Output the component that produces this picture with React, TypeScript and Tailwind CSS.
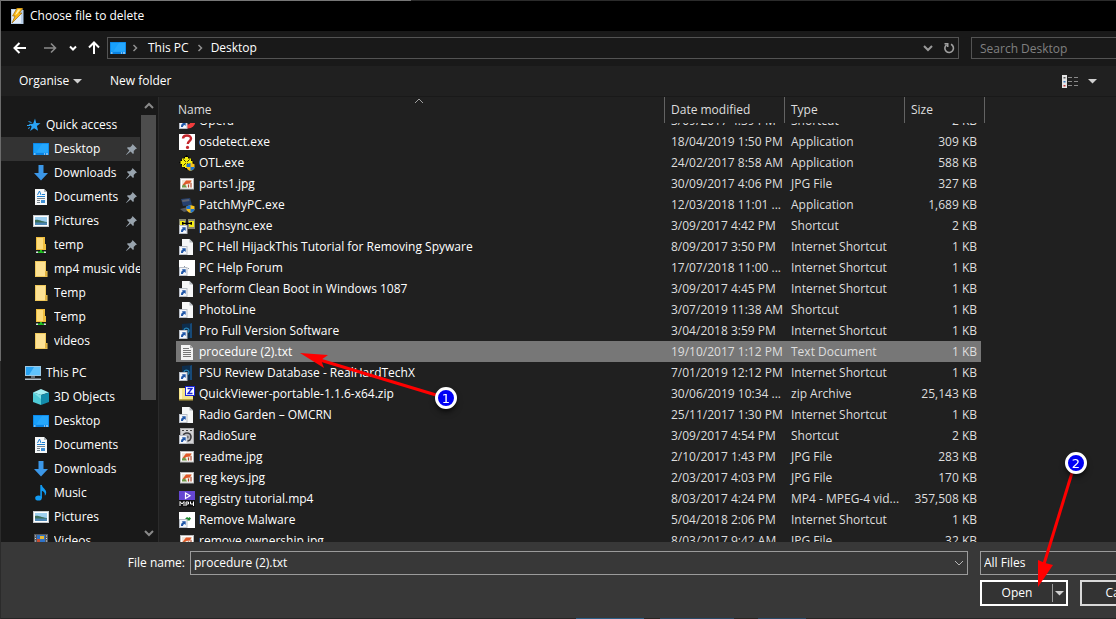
import { useLayoutEffect, useRef, useState } from 'react';
import type { ReactNode } from 'react';

type IconName =
  | 'opera' | 'question' | 'otl' | 'jpg' | 'patch' | 'pathsync' | 'page' | 'blank' | 'disc'
  | 'text' | 'zip' | 'speaker' | 'mp4' | 'malware' | 'star' | 'desktop' | 'download' | 'document'
  | 'pictures' | 'folder' | 'netFolder' | 'pc' | 'cube' | 'music' | 'videos';

// Small arrow badge in the corner of every shortcut
const shortcut = (
  <g>
    <path d="M0 7h8.500v9H0z" fill="#b9bec6" />
    <path d="M1 8h6.500v7H1z" fill="#f4f6fa" />
    <path d="M2 14c0-2.300.6-3.200 1.900-3.700L2.800 9.200h3.900v3.900l-1.100-1.100c-1 .4-1.500 1-1.600 2z" fill="#2057a8" />
  </g>
);

const shield = (
  <g>
    <path d="M11.500 8l4 1.200v3c0 2-2 3-4 3.800-2-.8-4-1.800-4-3.800v-3z" fill="#f8c21c" />
    <path d="M11.500 8v4h-4V9.200zM11.500 12h4c0 2.200-2 3.200-4 4z" fill="#1e74d2" />
  </g>
);

const sheet = (
  <g>
    <path d="M3 0h7.500L14 3.500V16H3z" fill="#f6f7f8" />
    <path d="M10.500 0L14 3.500h-3.500z" fill="#b4b9be" />
  </g>
);

const desktop = (
  <g>
    <path d="M0 2h16v12H0z" fill="#0a84e4" />
    <path d="M.8 2.800h14.400v9H.8z" fill="#18a0fb" />
    <path d="M9 2.800h6.200v9H3z" fill="#2fabff" opacity=".6" />
    <path d="M1 12.500h1.500v1H1zM11 12.500h1v1h-1zM13 12.500h2v1h-2z" fill="#e9f6ff" />
  </g>
);

const icons: Record<IconName, ReactNode> = {
  opera: (
    <g>
      <circle cx="9" cy="8" r="7.500" fill="#f23c3c" />
      <ellipse cx="9" cy="7" rx="2.600" ry="4.500" fill="#202020" />
      {shortcut}
    </g>
  ),
  question: (
    <g>
      <path d="M0 0h16v16H0z" fill="#fff" />
      <path d="M4 4.500C4.200 2.300 6 1.500 8 1.500c2.400 0 4 1.200 4 3.100 0 2.600-3.200 2.600-3.200 5.400" fill="none" stroke="#c4272d" strokeWidth="2.400" />
      <circle cx="8.500" cy="13.400" r="1.600" fill="#c4272d" />
    </g>
  ),
  otl: (
    <g>
      <path d="M7.500 0L15 7.500 7.500 15 0 7.500z" fill="#000" />
      <path d="M6 2h3v1.500h3V6h1.500v3H12v3H9v1H6v-1H3V9H1.500V6H3V3.500h3z" fill="#f5ee0e" />
      <path d="M4.500 4.500l6 6M10.500 4.500l-6 6" stroke="#000" strokeWidth=".8" />
      <path d="M6.500 6.500h2v2h-2z" fill="#f5ee0e" />
      {shield}
    </g>
  ),
  jpg: (
    <g>
      <path d="M1 2h14v11.500H1z" fill="#b9b9b9" />
      <path d="M2 3h12v9.500H2z" fill="#fff" />
      <path d="M3 4h10v7.500H3z" fill="#efe6da" />
      <path d="M3.500 9L7 4.500h5.500L11 7.500l-4 .5-1.500 2z" fill="#e0592a" />
      <path d="M3 9.500l3-1 2 3H3z" fill="#6f9a4a" />
      <path d="M9 8.500h1v3H9zM11.500 7h1v4.500h-1z" fill="#b0432c" />
    </g>
  ),
  patch: (
    <g>
      <path d="M2 2l9-1 2 7-9 1z" fill="#26406f" />
      <path d="M3 3l7-1 .5 2-7 1z" fill="#5e6573" />
      <path d="M1 12l8-2 4 3-8 2z" fill="#54595f" />
      {shield}
    </g>
  ),
  pathsync: (
    <g>
      <path d="M0 1h7v8H0zM9 1h7v10H9z" fill="#8a8a70" />
      <path d="M1 3h5v5H1zM10 3h5v6h-5z" fill="#f2ea18" />
      <path d="M3 4.800h10v1.200H3zM3 4h1.500v2.800H3zM11.500 4H13v2.800h-1.500z" fill="#000" />
      {shortcut}
    </g>
  ),
  page: <g>{sheet}{shortcut}</g>,
  blank: (
    <g>
      <path d="M0 0h16v16H0z" fill="#fff" />
      <path d="M5 6h1v1H5zM9 8h1v1H9z" fill="#8c98a5" />
      {shortcut}
    </g>
  ),
  disc: (
    <g>
      <path d="M3 1l10-1v15H3z" fill="#0d2d4c" />
      <path d="M11 1l2-1v15h-2z" fill="#174a78" />
      <path d="M5 7a2.500 2.500 0 1 1 4 2.500" fill="none" stroke="#2787b8" strokeWidth="1.300" />
      {shortcut}
    </g>
  ),
  text: (
    <g>
      <path d="M2 1h9l3 3v12H2z" fill="#f3f3f3" />
      <path d="M11 1l3 3h-3z" fill="#a9a9a9" />
      <path d="M4 4.500h6M4 6.500h8M4 8.500h8M4 10.500h8M4 12.500h8" stroke="#777" strokeWidth="1" />
    </g>
  ),
  zip: (
    <g>
      <path d="M0 2h6v1h8v11H0z" fill="#f4e48a" />
      <path d="M1 3h2v10H1z" fill="#fdf6c4" />
      <path d="M0 13h14v1.500H0z" fill="#bba644" />
      <path d="M6 0h10v10H6z" fill="#1925d9" />
      <path d="M7 1h8v8H7z" fill="#fff" />
      <path d="M8.500 2.500h4.500L9 7.500h4.500" fill="none" stroke="#1925d9" strokeWidth="1.400" />
    </g>
  ),
  speaker: (
    <g>
      <path d="M1 0h14v16H1z" fill="#a9a9ab" />
      <path d="M2 1h12v14H2z" fill="#d4d4d6" />
      <circle cx="8" cy="9" r="4.800" fill="#3b3b3f" />
      <circle cx="8" cy="9" r="3.200" fill="#b9b9bd" />
      <circle cx="8" cy="9" r="1.500" fill="#2b2b2f" />
      <path d="M3 2h2v1H3zM11 2h2v1h-2zM7 2h2v1H7z" fill="#444" />
      {shortcut}
    </g>
  ),
  mp4: (
    <g>
      <path d="M0 0h16v9H0z" fill="#6546d2" />
      <path d="M6.500 2v5.500L11 4.800z" fill="none" stroke="#fff" strokeWidth="1.200" />
      <path d="M0 9h16v7H0z" fill="#111" />
      <path d="M1 15v-4.500l2 2.500 2-2.500V15M7 15v-4h2.500v2H7M11.500 10.500v2.500H15M14.500 10.500V15" fill="none" stroke="#fff" strokeWidth="1" />
    </g>
  ),
  malware: (
    <g>
      <path d="M0 0h16v16H0z" fill="#fff" />
      <path d="M5 8l3-3 1.500 1L10.500 5 12 6.500 10 9 9 8l-2 2z" fill="#1c8a2e" />
      {shortcut}
    </g>
  ),
  star: (
    <g>
      <path d="M9 1.500l1.200 4.600 4.300.2-3.600 2.800 1.200 4.700-4-2.500-4 2.700 1.600-4.600-3.200-2.300 4.600-.4z" fill="#2aa4f4" />
      <path d="M2.500 4.500l3 1M1 8.500h3M2 11.500l2-1" stroke="#2aa4f4" strokeWidth="1" />
    </g>
  ),
  desktop,
  download: <path d="M5.500 0h5v8H15L8 15.500 1 8h4.500z" fill="#3b97e8" />,
  document: (
    <g>
      <path d="M2 0h9l3 3v13H2z" fill="#f5f7f8" />
      <path d="M11 0l3 3h-3z" fill="#aeb5ba" />
      <path d="M4.500 6L6.500 2l1.500 4M9 5.500h3M4 7.500h8" fill="none" stroke="#1d7fd0" strokeWidth="1" />
      <path d="M4 9.500h8M4 11.500h3M4 13.500h3" stroke="#77838c" />
      <path d="M8 11h4v3H8z" fill="#3f90d6" />
    </g>
  ),
  pictures: (
    <g>
      <path d="M0 2h16v12H0z" fill="#c6cacd" />
      <path d="M1 3h14v10H1z" fill="#fff" />
      <path d="M2 4h12v8H2z" fill="#9ed0f0" />
      <path d="M2 7c3-1 5 1 12 2v1H2z" fill="#3c6e58" />
      <path d="M2 9.500h12V12H2z" fill="#4b86b4" />
    </g>
  ),
  folder: (
    <g>
      <path d="M2 0h11v10h1.500v6H2z" fill="#f0c95c" />
      <path d="M3 1h9v14H3z" fill="#fde294" />
      <path d="M12 10.500l2-.5v5.500h-2z" fill="#e0b13f" />
    </g>
  ),
  netFolder: (
    <g>
      <path d="M3 0h9v7h1v6H3z" fill="#f0bf3f" />
      <path d="M4 1h6v11H4z" fill="#fddc7c" />
      <path d="M7 13h2v2H7zM4 14.500h8V16H4z" fill="#22c022" />
      <path d="M3 14.500h2V16H3zM11 14.500h2V16h-2z" fill="#d6dfe4" />
    </g>
  ),
  pc: (
    <g>
      <path d="M0 1h16v10H0z" fill="#9cc9e6" />
      <path d="M1 2h14v8H1z" fill="#27a2f2" />
      <path d="M9 2h6v8H4z" fill="#60c3fc" />
      <path d="M6 11.500h4v1H6zM0 13.500h16V15H0z" fill="#b4c2cc" />
    </g>
  ),
  cube: (
    <g>
      <path d="M0 3.500L8 0l8 3.500L8 6z" fill="#a5eef2" />
      <path d="M0 3.500L8 6v10l-8-3z" fill="#4fcbd6" />
      <path d="M16 3.500L8 6v10l8-3z" fill="#138cab" />
      <path d="M0 3.500L8 6v4z" fill="#7fe2e8" />
    </g>
  ),
  music: (
    <g>
      <ellipse cx="5.500" cy="13" rx="3.300" ry="2.600" fill="#119bf3" />
      <path d="M7.300 0h1.600c.3 3 4.300 4.200 4.300 7.400 0 1.600-.7 2.600-1.400 3.200.4-2.800-.7-4-2.900-4.900V13H7.300z" fill="#119bf3" />
    </g>
  ),
  videos: (
    <g>
      <path d="M1 1h14v14H1z" fill="#55595e" />
      <path d="M4 2h8v10H4z" fill="#2f73c9" />
      <path d="M7 3h4v3H7z" fill="#e9ba35" />
      <path d="M4 6h3v3H4z" fill="#c74c31" />
      <path d="M2 2.500h1v1H2zM2 5h1v1H2zM2 7.500h1v1H2zM13 2.500h1v1h-1zM13 5h1v1h-1zM13 7.500h1v1h-1z" fill="#d9dcdf" />
    </g>
  ),
};

function Icon({ name }: { name: IconName }) {
  return (
    <svg viewBox="0 0 16 16" className="w-4 h-4 shrink-0" aria-hidden="true">
      {icons[name]}
    </svg>
  );
}

function Chevron({ d = 'M1 3l4 4 4-4', className = '' }: { d?: string; className?: string }) {
  return (
    <svg viewBox="0 0 10 10" className={`w-2.5 h-2.5 shrink-0 ${className}`} fill="none" stroke="currentColor" aria-hidden="true">
      <path d={d} />
    </svg>
  );
}

function Triangle() {
  return (
    <svg viewBox="0 0 9 5" className="w-[9px] h-[5px] shrink-0 text-[#d0d0d0]" fill="currentColor" aria-hidden="true">
      <path d="M0 0h9L4.500 4.500z" />
    </svg>
  );
}

function Pin() {
  return (
    <svg viewBox="0 0 11 11" className="w-[11px] h-[11px] shrink-0" aria-hidden="true">
      <path d="M6.500 0L11 4.500l-1.300.4-2 2 .1 2.400-.8.700-2.400-2.400L.3 11 0 10.700l3.400-4.300L1 4l.7-.8 2.400.1 2-2z" fill="#98a3ad" />
    </svg>
  );
}

interface Place {
  label: string;
  icon: IconName;
  pinned?: boolean;
  selected?: boolean;
}

const quickAccess: Place[] = [
  { label: 'Desktop', icon: 'desktop', pinned: true, selected: true },
  { label: 'Downloads', icon: 'download', pinned: true },
  { label: 'Documents', icon: 'document', pinned: true },
  { label: 'Pictures', icon: 'pictures', pinned: true },
  { label: 'temp', icon: 'netFolder', pinned: true },
  { label: 'mp4 music videos', icon: 'folder' },
  { label: 'Temp', icon: 'folder' },
  { label: 'Temp', icon: 'netFolder' },
  { label: 'videos', icon: 'folder' },
];

const thisPc: Place[] = [
  { label: '3D Objects', icon: 'cube' },
  { label: 'Desktop', icon: 'desktop' },
  { label: 'Documents', icon: 'document' },
  { label: 'Downloads', icon: 'download' },
  { label: 'Music', icon: 'music' },
  { label: 'Pictures', icon: 'pictures' },
  { label: 'Videos', icon: 'videos' },
];

interface FileRow {
  name: string;
  icon: IconName;
  date: string;
  type: string;
  size: string;
}

const files: FileRow[] = [
  { name: 'Opera', icon: 'opera', date: '3/09/2017 4:39 PM', type: 'Shortcut', size: '2 KB' },
  { name: 'osdetect.exe', icon: 'question', date: '18/04/2019 1:50 PM', type: 'Application', size: '309 KB' },
  { name: 'OTL.exe', icon: 'otl', date: '24/02/2017 8:58 AM', type: 'Application', size: '588 KB' },
  { name: 'parts1.jpg', icon: 'jpg', date: '30/09/2017 4:06 PM', type: 'JPG File', size: '327 KB' },
  { name: 'PatchMyPC.exe', icon: 'patch', date: '12/03/2018 11:01 ...', type: 'Application', size: '1,689 KB' },
  { name: 'pathsync.exe', icon: 'pathsync', date: '3/09/2017 4:42 PM', type: 'Shortcut', size: '2 KB' },
  { name: 'PC Hell HijackThis Tutorial for Removing Spyware', icon: 'page', date: '8/09/2017 3:50 PM', type: 'Internet Shortcut', size: '1 KB' },
  { name: 'PC Help Forum', icon: 'blank', date: '17/07/2018 11:00 ...', type: 'Internet Shortcut', size: '1 KB' },
  { name: 'Perform Clean Boot in Windows 1087', icon: 'page', date: '3/09/2017 4:45 PM', type: 'Internet Shortcut', size: '1 KB' },
  { name: 'PhotoLine', icon: 'page', date: '3/07/2019 11:38 AM', type: 'Shortcut', size: '1 KB' },
  { name: 'Pro Full Version Software', icon: 'disc', date: '3/04/2018 3:59 PM', type: 'Internet Shortcut', size: '1 KB' },
  { name: 'procedure (2).txt', icon: 'text', date: '19/10/2017 1:12 PM', type: 'Text Document', size: '1 KB' },
  { name: 'PSU Review Database - RealHardTechX', icon: 'disc', date: '7/01/2019 12:12 PM', type: 'Internet Shortcut', size: '1 KB' },
  { name: 'QuickViewer-portable-1.1.6-x64.zip', icon: 'zip', date: '30/06/2019 10:34 ...', type: 'zip Archive', size: '25,143 KB' },
  { name: 'Radio Garden – OMCRN', icon: 'page', date: '25/11/2017 1:30 PM', type: 'Internet Shortcut', size: '1 KB' },
  { name: 'RadioSure', icon: 'speaker', date: '3/09/2017 4:54 PM', type: 'Shortcut', size: '2 KB' },
  { name: 'readme.jpg', icon: 'jpg', date: '2/10/2017 1:43 PM', type: 'JPG File', size: '283 KB' },
  { name: 'reg keys.jpg', icon: 'jpg', date: '2/03/2017 4:03 PM', type: 'JPG File', size: '170 KB' },
  { name: 'registry tutorial.mp4', icon: 'mp4', date: '8/03/2017 4:24 PM', type: 'MP4 - MPEG-4 vid...', size: '357,508 KB' },
  { name: 'Remove Malware', icon: 'malware', date: '5/04/2018 2:06 PM', type: 'Internet Shortcut', size: '1 KB' },
  { name: 'remove ownership.jpg', icon: 'jpg', date: '8/03/2017 9:42 AM', type: 'JPG File', size: '32 KB' },
];

function TitleBar() {
  return (
    <header className="flex items-center gap-1.5 h-[30px] pl-[9px] bg-black">
      <svg viewBox="0 0 14 16" className="w-3.5 h-4" aria-hidden="true">
        <path d="M1 1h11l1.500 1.500V16H1z" fill="#b9cfe8" />
        <path d="M2 2h9v13H2z" fill="#e4eefa" />
        <path d="M7 0h6L9.500 5H12L2 15l3-7H2.500z" fill="#fbb917" stroke="#8c5a08" strokeWidth=".6" />
        <path d="M8 1.500h2.500L7 6 5 7z" fill="#fff3b0" />
      </svg>
      <h1>Choose file to delete</h1>
    </header>
  );
}

function NavBar() {
  return (
    <nav className="flex items-center h-[35px] pl-[11px] pr-3 pb-px bg-[#191919]">
      <button aria-label="Back" className="w-4">
        <svg viewBox="0 0 16 16" className="w-4 h-4" fill="none" stroke="#fff" strokeWidth="2"><path d="M14 8H2.500M7.500 3l-5 5 5 5" /></svg>
      </button>
      <button aria-label="Forward" className="w-4 ml-3.5">
        <svg viewBox="0 0 16 16" className="w-4 h-4" fill="none" stroke="#8a8a8a" strokeWidth="1.600"><path d="M2 8h11.500M9 3.500L13.500 8 9 12.500" /></svg>
      </button>
      <button aria-label="Recent locations" className="ml-2.5">
        <Chevron d="M2 3.500l3 3 3-3" className="text-white stroke-2" />
      </button>
      <button aria-label="Up" className="w-4 ml-2 mr-[5px]">
        <svg viewBox="0 0 16 16" className="w-4 h-4" fill="none" stroke="#fff" strokeWidth="2"><path d="M8 14V2.500M3 7.500l5-5 5 5" /></svg>
      </button>
      <div className="flex-1 flex items-center h-[22px] border border-[#535353] pl-0.5">
        <Icon name="desktop" />
        <Chevron d="M3.500 2L6.500 5l-3 3" className="mx-1 mr-2 stroke-[1.500] text-[#8f8f8f]" />
        <button>This PC</button>
        <Chevron d="M3.500 2L6.500 5l-3 3" className="mx-1.5 stroke-[1.500] text-[#8f8f8f]" />
        <button>Desktop</button>
        <button aria-label="Previous locations" className="ml-auto mr-2.5">
          <Chevron className="text-[#9a9a9a] stroke-2" />
        </button>
        <button aria-label="Refresh" className="mr-[3px]">
          <svg viewBox="0 0 12 12" className="w-3 h-3" fill="none" stroke="#a0a0a0" strokeWidth="1.600">
            <path d="M8 2.300a4.300 4.300 0 1 1-4.500.5M1.500 1.800h3.200V5" />
          </svg>
        </button>
      </div>
      <input
        type="text"
        aria-label="Search Desktop"
        placeholder="Search Desktop"
        className="w-[197px] h-[22px] ml-3 px-2 border border-[#535353] bg-transparent placeholder:text-[#808080] outline-none"
      />
    </nav>
  );
}

function Toolbar() {
  return (
    <div className="flex items-center h-[31px] pl-[18px] pr-[83px] bg-[#202020] border-b border-[#191919]">
      <button className="flex items-center gap-1 w-[91px] text-left">
        Organise
        <Triangle />
      </button>
      <button>New folder</button>
      <button aria-label="Change view" className="flex items-center gap-2 ml-auto">
        <svg viewBox="0 0 18 13" className="w-[18px] h-[13px]" aria-hidden="true">
          <path d="M0 0h5v13H0z" fill="#e4e4e4" />
          <path d="M1.500 2h2v1.500h-2z" fill="#555" />
          <path d="M1.500 6h2v1.500h-2z" fill="#3a7ac0" />
          <path d="M1.500 10h2v1.500h-2z" fill="#c13333" />
          <path d="M6 2.500h4M12 2.500h4M6 6.500h4M12 6.500h4M6 10.500h4M12 10.500h4" stroke="#8a8a8a" />
        </svg>
        <Triangle />
      </button>
    </div>
  );
}

function PlaceItem({ place }: { place: Place }) {
  return (
    <li>
      <a href="#" className={`flex items-center gap-[5px] h-6 pl-8 ${place.pinned ? 'pr-[3px]' : ''} ${place.selected ? 'bg-[#333]' : ''}`}>
        <Icon name={place.icon} />
        <span className="flex-1 whitespace-nowrap overflow-hidden">{place.label}</span>
        {place.pinned && <Pin />}
      </a>
    </li>
  );
}

function Sidebar() {
  return (
    <aside className="flex shrink-0 w-[158px] bg-[#191919] border-r border-[#2b2b2b]">
      <div className="w-[139px] mr-px shrink-0 pt-4 overflow-hidden">
        <a href="#" className="flex items-center gap-1 h-6 pl-[25px]">
          <Icon name="star" />
          Quick access
        </a>
        <ul>
          {quickAccess.map((place, index) => (
            <PlaceItem key={index} place={place} />
          ))}
        </ul>
        <a href="#" className="flex items-center gap-[5px] h-6 mt-2 pl-6">
          <Icon name="pc" />
          This PC
        </a>
        <ul>
          {thisPc.map((place) => (
            <PlaceItem key={place.label} place={place} />
          ))}
        </ul>
      </div>
      {/* Scrollbar */}
      <div className="flex flex-col items-center w-[15px] text-[#8a8a8a]">
        <Chevron d="M1 7l4-4 4 4" className="my-1 stroke-2" />
        <div className="w-full h-[285px] bg-[#4d4d4d]"></div>
        <Chevron className="mt-auto mb-1 stroke-2" />
      </div>
    </aside>
  );
}

function FileList({ selected, onSelect }: { selected: string; onSelect: (name: string) => void }) {
  const listRef = useRef<HTMLDivElement>(null);

  useLayoutEffect(() => {
    if (listRef.current) listRef.current.scrollTop = 13;
  }, []);

  return (
    <main ref={listRef} className="flex-1 min-w-0 pl-[17px] overflow-hidden bg-[#202020]">
      <table className="table-fixed w-[809px] border-separate border-spacing-0 whitespace-nowrap">
        <colgroup>
          <col className="w-[489px]" />
          <col className="w-[120px]" />
          <col className="w-[120px]" />
          <col className="w-[76px]" />
          <col className="w-[4px]" />
        </colgroup>
        <thead className="sticky top-0 z-10 bg-[#202020] text-left text-[#dedede]">
          <tr className="h-[26px]">
            <th className="relative p-0 pl-0.5 font-normal border-r border-[#636363]">
              Name
              <Chevron d="M1 6l4-4 4 4" className="absolute top-0 left-1/2 -ml-1.5 text-[#a0a0a0]" />
            </th>
            <th className="p-0 pl-1.5 font-normal border-r border-[#636363]">Date modified</th>
            <th className="p-0 pl-1.5 font-normal border-r border-[#636363]">Type</th>
            <th className="p-0 pl-1.5 font-normal">Size</th>
            <th className="p-0 border-r border-[#636363]"></th>
          </tr>
        </thead>
        <tbody>
          {files.map((file) => {
            const cell = file.name === selected ? 'bg-[#777]' : '';
            return (
              <tr key={file.name} className="h-[21px] text-[#dedede] cursor-default" onClick={() => onSelect(file.name)}>
                <td className={`p-0 pl-[3px] text-white ${cell}`}>
                  <div className="flex items-center gap-1">
                    <Icon name={file.icon} />
                    {file.name}
                  </div>
                </td>
                <td className={`p-0 pl-1.5 ${cell}`}>{file.date}</td>
                <td className={`p-0 pl-1.5 ${cell}`}>{file.type}</td>
                <td className={`p-0 pr-1 text-right ${cell}`}>{file.size}</td>
                <td className="p-0"></td>
              </tr>
            );
          })}
        </tbody>
      </table>
    </main>
  );
}

function Footer({ fileName, onChange }: { fileName: string; onChange: (name: string) => void }) {
  return (
    <footer className="bg-[#383838]">
      <div className="flex flex-col gap-[5px] pt-[9px] pb-3 pr-3">
        <div className="flex items-center">
          <label htmlFor="file-name" className="w-[184px] text-right">File name:</label>
          <div className="flex-1 flex items-center h-6 ml-[5px] pl-[3px] pr-[3px] border border-[#9b9b9b]">
            <input
              id="file-name"
              type="text"
              value={fileName}
              onChange={(e) => onChange(e.target.value)}
              className="flex-1 bg-transparent outline-none"
            />
            <Chevron className="text-[#b5b5b5]" />
          </div>
          <select aria-label="File type" className="appearance-none w-[188px] h-6 ml-3 pl-[3px] border border-[#9b9b9b] bg-[#383838]">
            <option>All Files</option>
          </select>
        </div>
        <div className="flex justify-end gap-3">
          <div className="flex items-center w-[88px] h-[26px] border-2 border-white bg-[#333]">
            <button className="flex-1">Open</button>
            <button aria-label="Open options" className="flex items-center h-[18px] px-0.5 border-l border-[#9b9b9b]">
              <Triangle />
            </button>
          </div>
          <button className="w-[88px] h-[26px] border-2 border-[#d9d9d9] bg-[#333]">Cancel</button>
        </div>
      </div>
      {/* Sliver of the window behind the dialog */}
      <div className="flex h-px bg-[#262626]">
        <div className="w-[68px] ml-[575px] bg-[#2c5f86]"></div>
        <div className="w-[74px] ml-4 bg-[#2a4a66]"></div>
        <div className="w-12 ml-6 bg-[#2a4a66]"></div>
      </div>
    </footer>
  );
}

// Numbered red arrows that point at the two steps
function Annotations() {
  const badge =
    'absolute flex items-center justify-center w-[22px] h-[22px] rounded-full border-[3px] border-white bg-[#0000f5] font-["DejaVu_Sans",sans-serif] text-[13px] leading-none shadow-md shadow-black/60';
  return (
    <div className="absolute inset-0 z-20 pointer-events-none">
      <svg className="absolute inset-0 w-full h-full" fill="#f00" stroke="#f00" aria-hidden="true">
        <path d="M446 398L320 360" strokeWidth="3" />
        <path d="M300 353l28 2-7 5 3 8z" stroke="none" />
        <path d="M1075 463l-31 101" strokeWidth="3" />
        <path d="M1038 587v-27l7 3 8 2z" stroke="none" />
      </svg>
      <span className={`${badge} left-[435px] top-[387px]`}>1</span>
      <span className={`${badge} left-[1065px] top-[452px]`}>2</span>
    </div>
  );
}

export default function App() {
  const [fileName, setFileName] = useState('procedure (2).txt');

  return (
    <div className='relative h-screen overflow-hidden bg-[#191919] font-["Open_Sans",sans-serif] text-xs text-white'>
      {/* The dialog runs past the right edge of the window */}
      <div className="flex w-[calc(100%+64px)] h-full">
        <div className="w-px bg-[linear-gradient(#6b6b6b_361px,#2b2b2b_361px)]"></div>
        <div className="flex-1 min-w-0 flex flex-col">
          <div className="h-px shrink-0 bg-[linear-gradient(90deg,#777_410px,#2b2b2b_410px)]"></div>
          <TitleBar />
          <NavBar />
          <Toolbar />
          <div className="flex-1 min-h-0 flex">
            <Sidebar />
            <FileList selected="procedure (2).txt" onSelect={setFileName} />
          </div>
          <Footer fileName={fileName} onChange={setFileName} />
        </div>
      </div>
      <Annotations />
    </div>
  );
}
